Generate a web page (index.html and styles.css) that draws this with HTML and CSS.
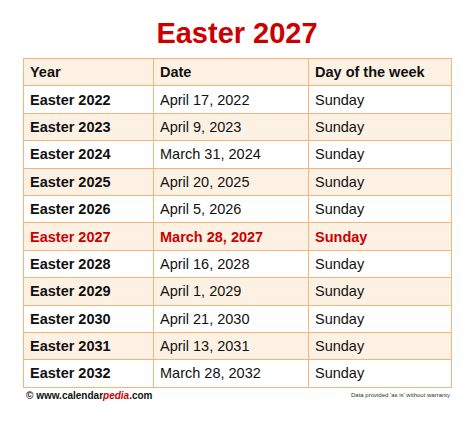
FILE: index.html
```html
<!DOCTYPE html>
<html>
<head>
<meta charset="utf-8">
<link rel="stylesheet" href="styles.css">
</head>
<body>
<div class="page">
  <h1 class="title">Easter 2027</h1>
  <table class="easter">
    <colgroup>
      <col class="c1"><col class="c2"><col class="c3">
    </colgroup>
    <tr class="shade head"><td>Year</td><td>Date</td><td>Day of the week</td></tr>
    <tr><td class="b">Easter 2022</td><td>April 17, 2022</td><td>Sunday</td></tr>
    <tr class="shade"><td class="b">Easter 2023</td><td>April 9, 2023</td><td>Sunday</td></tr>
    <tr><td class="b">Easter 2024</td><td>March 31, 2024</td><td>Sunday</td></tr>
    <tr class="shade"><td class="b">Easter 2025</td><td>April 20, 2025</td><td>Sunday</td></tr>
    <tr><td class="b">Easter 2026</td><td>April 5, 2026</td><td>Sunday</td></tr>
    <tr class="shade hl"><td>Easter 2027</td><td>March 28, 2027</td><td>Sunday</td></tr>
    <tr><td class="b">Easter 2028</td><td>April 16, 2028</td><td>Sunday</td></tr>
    <tr class="shade"><td class="b">Easter 2029</td><td>April 1, 2029</td><td>Sunday</td></tr>
    <tr><td class="b">Easter 2030</td><td>April 21, 2030</td><td>Sunday</td></tr>
    <tr class="shade"><td class="b">Easter 2031</td><td>April 13, 2031</td><td>Sunday</td></tr>
    <tr><td class="b">Easter 2032</td><td>March 28, 2032</td><td>Sunday</td></tr>
  </table>
  <div class="footer">
    <span class="site">© www.calendar<span class="pedia">pedia</span>.com</span>
    <span class="note">Data provided 'as is' without warranty</span>
  </div>
</div>
</body>
</html>
```

FILE: styles.css
```css
html, body {
  margin: 0;
  padding: 0;
  background: #ffffff;
}
body {
  font-family: "Liberation Sans", Arial, sans-serif;
  color: #111111;
}
.page {
  width: 428px;
  margin-left: 23px;
  padding-top: 17px;
}
.title {
  margin: 0 0 8px 0;
  height: 33px;
  line-height: 33px;
  font-size: 29px;
  font-weight: bold;
  color: #cc0000;
  text-align: center;
}
.easter {
  width: 428px;
  border-collapse: collapse;
  table-layout: fixed;
  font-size: 14.5px;
}
.c1 { width: 130px; }
.c2 { width: 155px; }
.c3 { width: 143px; }
.easter td {
  border: 1px solid #f5b57c;
  height: 26.4px;
  padding: 0 0 0 6px;
  vertical-align: middle;
  white-space: nowrap;
}
.shade td {
  background: #fdf1e4;
}
.head td, .b {
  font-weight: bold;
}
.hl td {
  color: #cc0000;
  font-weight: bold;
}
.footer {
  display: flex;
  justify-content: space-between;
  align-items: center;
  padding: 2px 1px 0 3px;
}
.site {
  font-size: 10px;
  font-weight: bold;
  color: #111111;
}
.pedia {
  color: #cc0000;
  font-style: italic;
}
.note {
  font-size: 6px;
  color: #333333;
}
```
